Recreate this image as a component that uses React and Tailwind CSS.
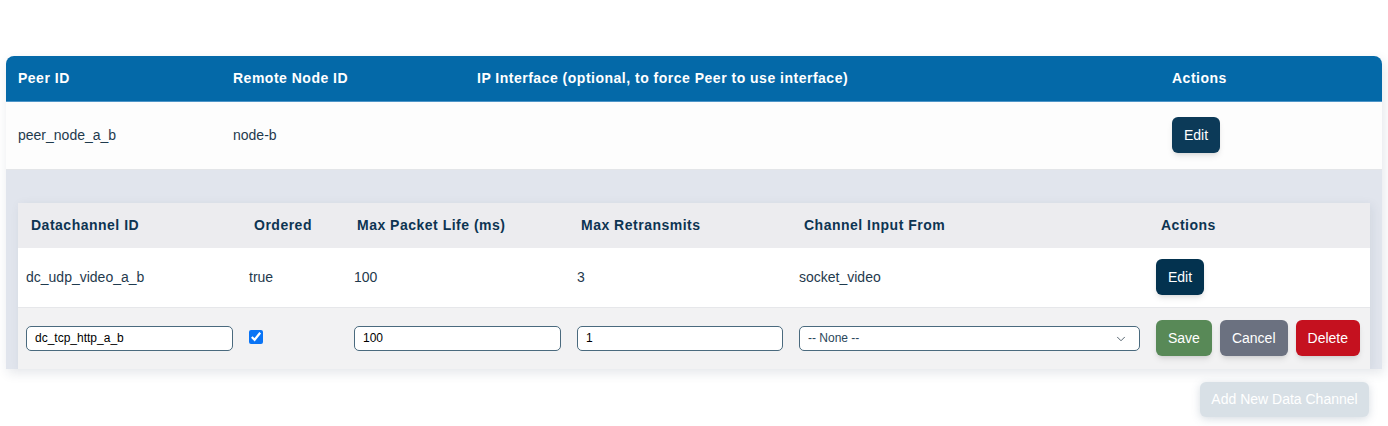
import { ChevronDown } from "lucide-react";

const font = { fontFamily: '"Liberation Sans", Arial, sans-serif' };

export default function App() {
    return (
        <div className="min-h-screen bg-white pt-[56px]" style={font}>
            <div className="mx-[6px] rounded-t-lg overflow-hidden shadow-[2px_4px_12px_rgba(30,50,80,0.12)]">
                <table className="w-full table-fixed border-collapse text-sm">
                    <thead>
                        <tr className="bg-[#0469a8] text-white border-b border-[#4d95c8] tracking-[0.5px]">
                            <th className="w-[215px] h-[45px] px-3 text-left font-bold">Peer ID</th>
                            <th className="w-[244px] px-3 text-left font-bold">Remote Node ID</th>
                            <th className="w-[695px] px-3 text-left font-bold">
                                IP Interface (optional, to force Peer to use interface)
                            </th>
                            <th className="px-3 text-left font-bold">Actions</th>
                        </tr>
                    </thead>
                    <tbody>
                        <tr className="bg-[#fdfdfd] text-[#1f3a4d] border-b border-[#e3e5e8]">
                            <td className="h-[68px] px-3">peer_node_a_b</td>
                            <td className="px-3">node-b</td>
                            <td className="px-3"></td>
                            <td className="px-3">
                                <button className="rounded-md bg-[#0c3a58] px-3 py-2 text-sm text-white shadow-md">
                                    Edit
                                </button>
                            </td>
                        </tr>
                        <tr className="bg-[#e1e5ed]">
                            <td colSpan={4} className="px-3 pt-[33px]">
                                <DataChannels />
                            </td>
                        </tr>
                    </tbody>
                </table>
            </div>

            <div className="flex justify-end mx-[6px] pr-[13px] pt-[13px]">
                <button className="h-[35px] w-[169px] rounded-md bg-[#d8e0e6] text-sm text-white shadow-[0_2px_8px_rgba(120,140,160,0.3)]">
                    Add New Data Channel
                </button>
            </div>
        </div>
    );
}

function DataChannels() {
    const inputCls =
        "w-full h-[25px] rounded-[5px] border border-[#4a6a7e] bg-white px-2 text-xs text-black outline-none";

    return (
        <table className="w-full table-fixed border-collapse text-sm shadow-[2px_2px_10px_rgba(30,50,80,0.08)]">
            <thead>
                <tr className="bg-[#ececef] text-[#0d3452] tracking-[0.5px]">
                    <th className="w-[223px] h-[45px] pl-[13px] text-left font-bold">Datachannel ID</th>
                    <th className="w-[105px] pl-[13px] text-left font-bold">Ordered</th>
                    <th className="w-[223px] pl-[11px] text-left font-bold">Max Packet Life (ms)</th>
                    <th className="w-[222px] pl-[12px] text-left font-bold">Max Retransmits</th>
                    <th className="w-[357px] pl-[13px] text-left font-bold">Channel Input From</th>
                    <th className="pl-[13px] text-left font-bold">Actions</th>
                </tr>
            </thead>
            <tbody>
                <tr className="bg-white text-[#1f3a4d] border-b border-[#e6e7ea]">
                    <td className="h-[60px] px-2">dc_udp_video_a_b</td>
                    <td className="px-2">true</td>
                    <td className="px-2">100</td>
                    <td className="px-2">3</td>
                    <td className="px-2">socket_video</td>
                    <td className="px-2">
                        <button className="rounded-md bg-[#03324f] px-3 py-2 text-sm text-white shadow-md">
                            Edit
                        </button>
                    </td>
                </tr>
                <tr className="bg-[#f2f2f3]">
                    <td className="h-[61px] px-2">
                        <input className={inputCls} defaultValue="dc_tcp_http_a_b" />
                    </td>
                    <td className="px-2">
                        <input type="checkbox" defaultChecked className="w-[14px] h-[14px] accent-[#0a74f5] -mt-[6px] align-middle" />
                    </td>
                    <td className="px-2">
                        <input className={inputCls} defaultValue="100" />
                    </td>
                    <td className="px-2">
                        <input className={inputCls} defaultValue="1" />
                    </td>
                    <td className="px-2">
                        <div className="relative">
                            <select className="w-full h-[25px] appearance-none rounded-[5px] border border-[#4a6a7e] bg-white px-2 text-xs text-[#2a475b] outline-none">
                                <option>-- None --</option>
                            </select>
                            <ChevronDown className="pointer-events-none absolute right-[12px] top-[6px] h-[14px] w-[14px] text-[#4a5a66]" strokeWidth={1.6} />
                        </div>
                    </td>
                    <td className="px-2">
                        <div className="flex gap-2">
                            <button className="rounded-md bg-[#588957] px-3 py-2 text-sm text-white shadow-md">Save</button>
                            <button className="rounded-md bg-[#6b7180] px-3 py-2 text-sm text-white shadow-md">Cancel</button>
                            <button className="rounded-md bg-[#c5111f] px-3 py-2 text-sm text-white shadow-md">Delete</button>
                        </div>
                    </td>
                </tr>
            </tbody>
        </table>
    );
}
